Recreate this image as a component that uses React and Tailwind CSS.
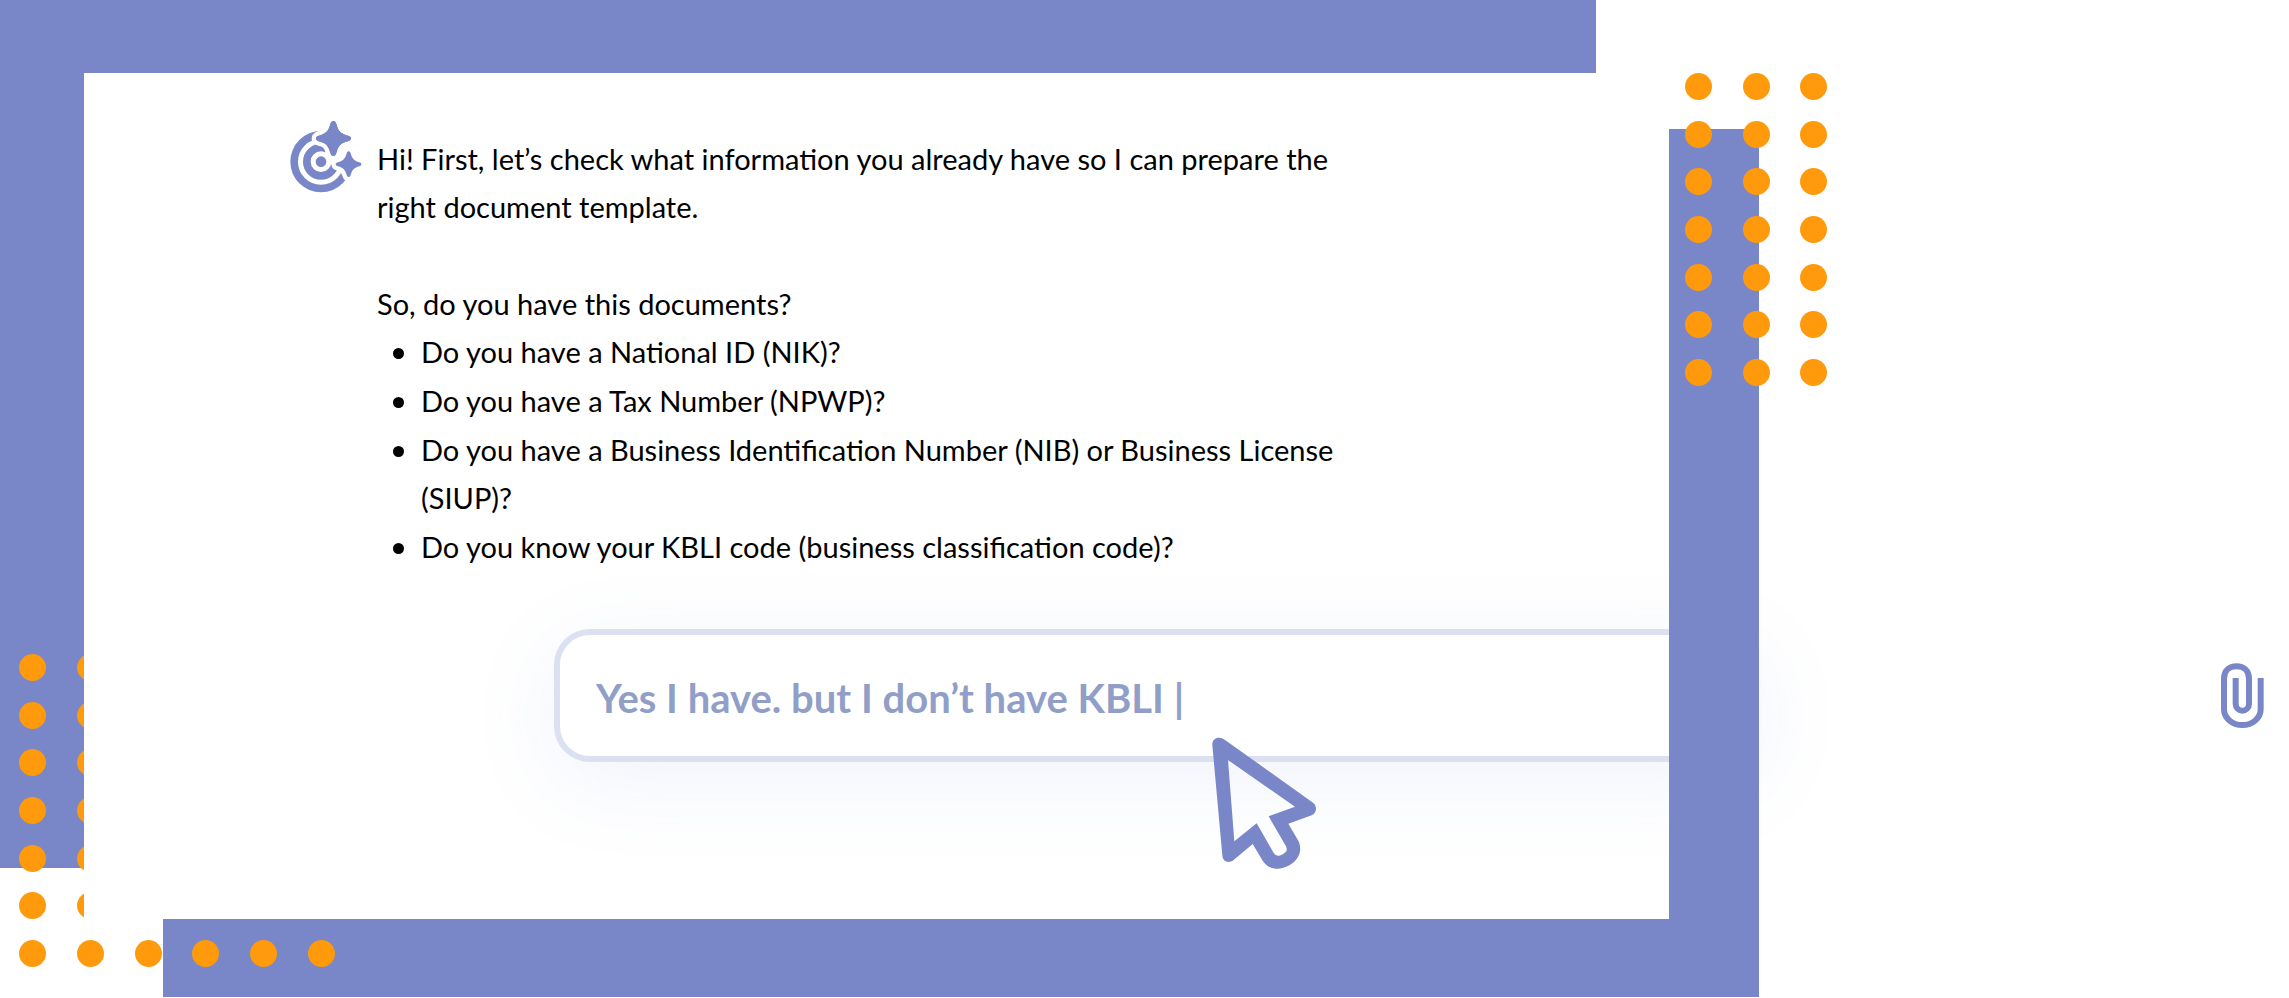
import React from "react";

const documents = [
  "Do you have a National ID (NIK)?",
  "Do you have a Tax Number (NPWP)?",
  "Do you have a Business Identification Number (NIB) or Business License (SIUP)?",
  "Do you know your KBLI code (business classification code)?",
];

function DotGrid({ columns, className }) {
  return (
    <div aria-hidden="true" className={`flex h-[313px] flex-col justify-between ${className}`}>
      {Array.from({ length: 7 }, (_, row) => (
        <div key={row} className="flex justify-between">
          {Array.from({ length: columns }, (_, col) => (
            <span key={col} className="size-[27px] rounded-full bg-[#ff9a0d]" />
          ))}
        </div>
      ))}
    </div>
  );
}

function AssistantLogo() {
  const bigStar =
    "M160 33C165 33 167 36 169 42C175 64 182 71 204 77C210 79 213 81 213 85C213 89 210 92 204 94C182 99 175 107 169 129C167 135 165 138 160 138C156 138 153 135 151 129C145 107 138 99 116 94C110 92 108 89 108 85C108 81 110 79 116 77C138 71 145 64 151 42C153 36 156 33 160 33Z";
  const smallStar =
    "M206 124C209 124 211 126 212 130C216 146 223 153 238 157C242 158 244 160 244 163C244 166 242 168 238 169C223 173 216 180 212 195C211 199 209 201 206 201C203 201 201 199 200 195C196 180 189 173 174 169C170 168 167 166 167 163C167 160 170 158 174 157C189 153 196 146 200 130C201 126 203 124 206 124Z";
  return (
    <svg viewBox="30 30 216 219" className="h-[73px] w-[72px] shrink-0" aria-hidden="true">
      <circle cx="123" cy="155" r="92" fill="#7986c7" />
      <circle cx="123" cy="155" r="61.500" fill="none" stroke="#fff" strokeWidth="15" />
      <circle cx="123" cy="155" r="23.500" fill="none" stroke="#fff" strokeWidth="15" />
      <path d="M147 140L165 85L250 60V190L206 175L152 163Z" fill="#fff" />
      <path d={bigStar} fill="#7986c7" stroke="#fff" strokeWidth="26" strokeLinejoin="round" paintOrder="stroke" />
      <path d={smallStar} fill="#7986c7" stroke="#fff" strokeWidth="26" strokeLinejoin="round" paintOrder="stroke" />
      <path d={bigStar} fill="#7986c7" />
    </svg>
  );
}

function Pointer() {
  return (
    <svg
      viewBox="90 78 324 402"
      className="pointer-events-none absolute top-[107px] left-[656px] h-[134px] w-[108px]"
      aria-hidden="true"
    >
      <path
        fill="#7986c7"
        fillRule="evenodd"
        d="M97 105C96 91 105 83 117 83Q126 83 134 89L399 278Q408 285 408 297Q407 310 395 316L325 341L354 391C369 419 358 448 328 466C298 483 266 479 249 454L218 402L160 451C147 460 128 457 127 436ZM144 150L163 394L230 340L281 429Q287 439 298 437Q312 434 319 424Q322 418 318 409L266 319L345 290Z"
      />
    </svg>
  );
}

function Paperclip() {
  return (
    <svg viewBox="120 62 135 201" className="h-[67px] w-[45px]" aria-hidden="true">
      <path
        fill="none"
        stroke="#7986c7"
        strokeWidth="18"
        d="M242 110V204A55 47 0 0 1 132 204V112C132 88 148 75 169.500 75C191 75 207 88 207 112V188A20 20 0 0 1 167 188V110"
      />
    </svg>
  );
}

export default function App() {
  return (
    <main className="grid min-h-screen grid-cols-[84px_79px_minmax(0,1fr)_73px_90px_530px] grid-rows-[73px_56px_739px_51px_78px] overflow-hidden bg-white font-[Lato,Carlito,sans-serif] text-black">
      <div className="col-span-3 col-start-1 row-start-1 bg-[#7986c7]" />
      <div className="col-start-1 row-span-2 row-start-2 bg-[#7986c7]" />
      <div className="col-span-4 col-start-2 row-start-5 ml-[79px] bg-[#7986c7]" />
      <DotGrid
        columns={6}
        className="col-span-3 col-start-1 row-span-5 row-start-1 mb-[30px] ml-[19px] w-[316px] self-end"
      />

      <div className="col-span-3 col-start-2 row-span-3 row-start-2 bg-white" />
      <section className="col-span-5 col-start-2 row-span-3 row-start-2 flex flex-col">
        <article className="flex pt-[47px] pl-[206px]">
          <AssistantLogo />
          <div className="ml-[15px] w-[970px] pt-[15px] text-[29px] leading-[48px]">
            <p>Hi! First, let’s check what information you already have so I can prepare the right document template.</p>
            <p className="mt-[49px]">So, do you have this documents?</p>
            <ul className="space-y-px">
              {documents.map((text) => (
                <li
                  key={text}
                  className="relative pl-11 before:absolute before:top-5 before:left-4 before:size-[11px] before:rounded-full before:bg-black"
                >
                  {text}
                </li>
              ))}
            </ul>
          </div>
        </article>

        <form className="mt-[58px] flex items-center pl-[470px]" onSubmit={(e) => e.preventDefault()}>
          <div className="relative min-w-0 flex-1">
            <input
              type="text"
              aria-label="Your answer"
              defaultValue="Yes I have. but I don’t have KBLI |"
              className="block h-[133px] w-full rounded-[36px] border-[6px] border-[#dce1f2] bg-white px-9 pt-1 text-[40px] font-bold text-[#919fc8] shadow-[0_20px_90px_rgba(90,125,215,0.09)] outline-none"
            />
            <Pointer />
          </div>
          <div className="flex w-[530px] justify-end pr-6">
            <button type="button" aria-label="Attach a file">
              <Paperclip />
            </button>
          </div>
        </form>
      </section>

      <div className="z-10 col-start-5 row-span-3 row-start-3 bg-[#7986c7]" />
      <DotGrid columns={3} className="z-20 col-span-2 col-start-5 row-span-3 row-start-2 ml-4 w-[142px]" />
    </main>
  );
}
